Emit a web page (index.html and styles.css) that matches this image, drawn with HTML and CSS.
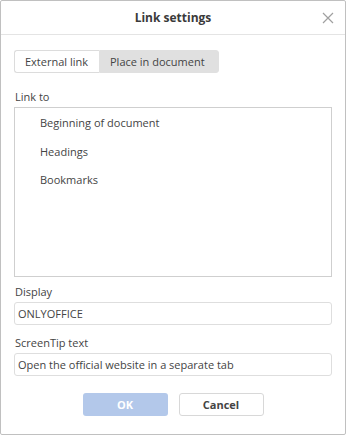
FILE: index.html
```html
<!DOCTYPE html>
<html>
<head>
<meta charset="utf-8">
<link rel="stylesheet" href="styles.css">
</head>
<body>
<div class="dialog">
  <div class="header">
    <div class="title">Link settings</div>
    <svg class="close" width="12" height="12" viewBox="0 0 12 12"><path d="M1 1L11 11M11 1L1 11" stroke="#a0a0a0" stroke-width="1.2" fill="none"/></svg>
  </div>
  <div class="body">
    <div class="tabs">
      <div class="tab">External link</div>
      <div class="tab active">Place in document</div>
    </div>
    <div class="label first">Link to</div>
    <div class="list">
      <div class="item">Beginning of document</div>
      <div class="item">Headings</div>
      <div class="item">Bookmarks</div>
    </div>
    <div class="label">Display</div>
    <div class="input">ONLYOFFICE</div>
    <div class="label second">ScreenTip text</div>
    <div class="input">Open the official website in a separate tab</div>
    <div class="buttons">
      <div class="btn ok">OK</div>
      <div class="btn cancel">Cancel</div>
    </div>
  </div>
</div>
</body>
</html>
```
FILE: styles.css
```css
html, body {
  margin: 0;
  padding: 0;
  background: #ffffff;
}
body {
  font-family: "Open Sans", "Noto Sans", sans-serif;
  font-size: 11px;
  color: #444444;
}
.dialog {
  width: 344px;
  height: 433px;
  border: 1px solid #c0c0c0;
  border-radius: 2px;
  background: #fff;
  display: flex;
  flex-direction: column;
}
.header {
  height: 33px;
  border-bottom: 1px solid #e4e4e4;
  position: relative;
  display: flex;
  align-items: center;
  justify-content: center;
}
.title {
  font-weight: bold;
  font-size: 12px;
  color: #3a3a3a;
}
.close {
  position: absolute;
  right: 11px;
  top: 11px;
}
.body {
  padding: 15px 13px 0 13px;
  display: flex;
  flex-direction: column;
}
.tabs {
  display: flex;
  align-self: flex-start;
  height: 23px;
}
.tab {
  display: flex;
  align-items: center;
  padding: 0 10px;
  border: 1px solid #dcdcdc;
  box-sizing: border-box;
  height: 23px;
  color: #444;
}
.tab:first-child {
  width: 85px;
  border-radius: 3px 0 0 3px;
  border-right: none;
}
.tab.active {
  width: 120px;
  background: #e0e0e0;
  border-color: #e0e0e0;
  border-radius: 0 3px 3px 0;
}
.label {
  height: 17px;
  line-height: 17px;
  margin-top: 6px;
  padding-left: 1px;
}
.label.first {
  margin-top: 15px;
}
.label.second {
  margin-top: 9px;
}
.list {
  box-sizing: border-box;
  height: 170px;
  border: 1px solid #cfcfcf;
  margin-top: 2px;
  padding-top: 6px;
  display: flex;
  flex-direction: column;
}
.item {
  height: 28.5px;
  line-height: 17px;
  padding-left: 25px;
  flex-shrink: 0;
}
.input {
  height: 21px;
  line-height: 21px;
  border: 1px solid #dedede;
  border-radius: 3px;
  padding: 0 3px;
  margin-top: 2px;
  color: #444;
}
.buttons {
  display: flex;
  justify-content: center;
  gap: 11px;
  margin-top: 17px;
}
.btn {
  width: 85px;
  height: 23px;
  box-sizing: border-box;
  border-radius: 3px;
  display: flex;
  align-items: center;
  justify-content: center;
  font-weight: bold;
}
.btn.ok {
  background: #b3c8ea;
  color: #fff;
}
.btn.cancel {
  border: 1px solid #d8d8d8;
  color: #444;
}
```
